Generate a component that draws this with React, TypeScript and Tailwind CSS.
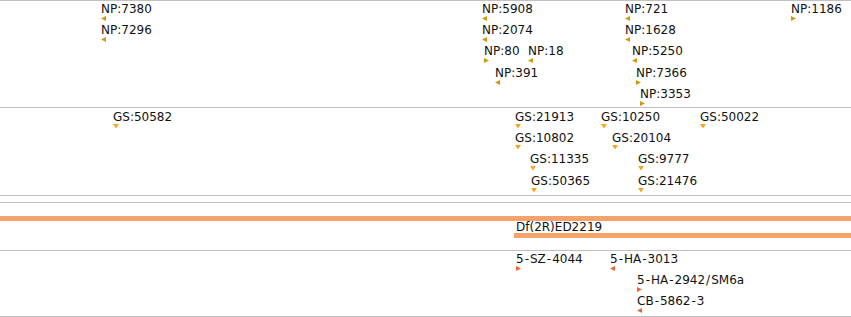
import React from 'react';

type Dir = 'left' | 'right' | 'down';

interface Feature {
  label: string;
  x: number;
  row: number;
  dir: Dir;
}

// cap-top of text rows, relative to each track's top edge
const npRows = [3, 24, 45, 67, 88];
const gsRows = [4, 25, 46, 68];
const dfRows = [3, 24, 45];

const npFeatures: Feature[] = [
  { label: 'NP:7380', x: 101, row: 0, dir: 'left' },
  { label: 'NP:7296', x: 101, row: 1, dir: 'left' },
  { label: 'NP:5908', x: 482, row: 0, dir: 'left' },
  { label: 'NP:2074', x: 482, row: 1, dir: 'left' },
  { label: 'NP:80', x: 484, row: 2, dir: 'right' },
  { label: 'NP:18', x: 528, row: 2, dir: 'left' },
  { label: 'NP:391', x: 495, row: 3, dir: 'left' },
  { label: 'NP:721', x: 625, row: 0, dir: 'left' },
  { label: 'NP:1628', x: 625, row: 1, dir: 'left' },
  { label: 'NP:5250', x: 632, row: 2, dir: 'left' },
  { label: 'NP:7366', x: 636, row: 3, dir: 'right' },
  { label: 'NP:3353', x: 640, row: 4, dir: 'right' },
  { label: 'NP:1186', x: 791, row: 0, dir: 'right' },
];

const gsFeatures: Feature[] = [
  { label: 'GS:50582', x: 113, row: 0, dir: 'down' },
  { label: 'GS:21913', x: 515, row: 0, dir: 'down' },
  { label: 'GS:10250', x: 601, row: 0, dir: 'down' },
  { label: 'GS:50022', x: 700, row: 0, dir: 'down' },
  { label: 'GS:10802', x: 515, row: 1, dir: 'down' },
  { label: 'GS:20104', x: 612, row: 1, dir: 'down' },
  { label: 'GS:11335', x: 530, row: 2, dir: 'down' },
  { label: 'GS:9777', x: 638, row: 2, dir: 'down' },
  { label: 'GS:50365', x: 531, row: 3, dir: 'down' },
  { label: 'GS:21476', x: 638, row: 3, dir: 'down' },
];

const alleleFeatures: Feature[] = [
  { label: '5-SZ-4044', x: 516, row: 0, dir: 'right' },
  { label: '5-HA-3013', x: 610, row: 0, dir: 'left' },
  { label: '5-HA-2942/SM6a', x: 637, row: 1, dir: 'right' },
  { label: 'CB-5862-3', x: 637, row: 2, dir: 'left' },
];

function Arrow({ dir, color }: { dir: Dir; color: string }) {
  if (dir === 'down') {
    return (
      <svg width="6" height="5" viewBox="0 0 6 5" className="block">
        <polygon points="0,0 6,0 3,4.5" fill={color} />
      </svg>
    );
  }
  const pts = dir === 'left' ? '0,2.5 5,0 5,5' : '0,0 5,2.5 0,5';
  return (
    <svg width="5" height="5" viewBox="0 0 5 5" className="block">
      <polygon points={pts} fill={color} />
    </svg>
  );
}

// the original renderer spaces hyphens and slashes out a little
function Label({ text }: { text: string }) {
  const parts = text.split(/([-/])/);
  return (
    <>
      {parts.map((p, i) =>
        p === '-' || p === '/' ? (
          <span key={i} className="mx-[1px]">{p}</span>
        ) : (
          <React.Fragment key={i}>{p}</React.Fragment>
        )
      )}
    </>
  );
}

function Track({ features, rows, color, className }: { features: Feature[]; rows: number[]; color: string; className: string }) {
  return (
    <div className={`relative ${className}`}>
      {features.map((f) => (
        <React.Fragment key={f.label}>
          <span
            className="absolute whitespace-nowrap text-[12px] leading-[14px] text-[#111]"
            style={{ left: f.x, top: rows[f.row] - 2 }}
          >
            <Label text={f.label} />
          </span>
          <span className="absolute" style={{ left: f.x, top: rows[f.row] + 12 }}>
            <Arrow dir={f.dir} color={color} />
          </span>
        </React.Fragment>
      ))}
    </div>
  );
}

export default function App() {
  return (
    <div
      className="w-[851px] h-[317px] bg-white overflow-hidden flex flex-col"
      style={{ fontFamily: '"DejaVu Sans", "Liberation Sans", sans-serif' }}
    >
      <div className="h-px bg-[#c0c0c0]" />
      <Track features={npFeatures} rows={npRows} color="#d4960a" className="h-[106px]" />
      <div className="h-px bg-[#c0c0c0]" />
      <Track features={gsFeatures} rows={gsRows} color="#f5a623" className="h-[87px]" />
      <div className="h-px bg-[#c0c0c0]" />
      <div className="h-[6px]" />
      <div className="h-px bg-[#c0c0c0]" />

      {/* deficiency track */}
      <div className="h-[47px] flex flex-col">
        <div className="h-[13px]" />
        <div className="h-[5px] bg-[#f4a36d]" />
        <div className="pl-[516px] text-[12px] leading-[14px] text-[#111] -mt-[1px]">Df(2R)ED2219</div>
        <div className="ml-[514px] h-[5px] bg-[#f4a36d] -mt-[1px]" />
      </div>
      <div className="h-px bg-[#c0c0c0]" />

      <Track features={alleleFeatures} rows={dfRows} color="#f4623a" className="h-[65px]" />
      <div className="h-px bg-[#c0c0c0]" />
    </div>
  );
}
